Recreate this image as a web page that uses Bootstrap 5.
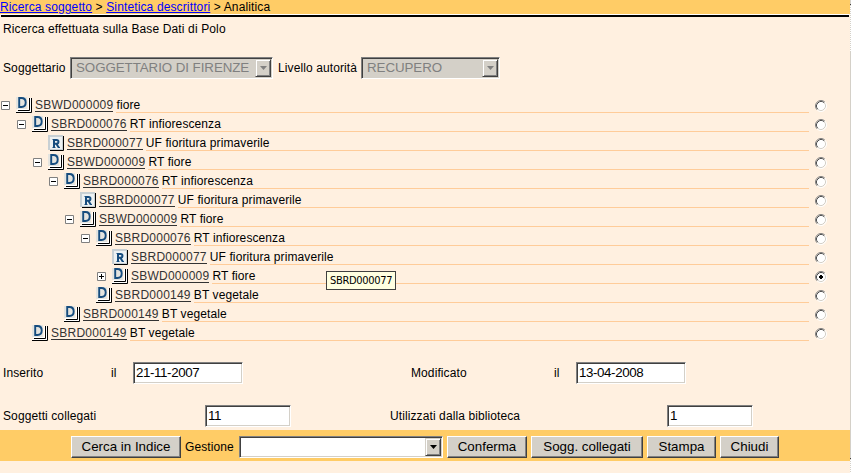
<!DOCTYPE html>
<html lang="it">
<head>
<meta charset="utf-8">
<meta name="viewport" content="width=device-width, initial-scale=1">
<title>Analitica</title>
<link href="https://cdn.jsdelivr.net/npm/bootstrap@5.3.0/dist/css/bootstrap.min.css" rel="stylesheet">
<style>
body{background:#fff0e0;color:#000;font:12px/14px "Liberation Sans",Arial,sans-serif;letter-spacing:.1px;height:473px;overflow:hidden;white-space:nowrap}
.page-main{width:850px;height:473px}
.page-edge{width:1px;background:linear-gradient(#d4d0c8 0 4px,#404040 4px 5px,transparent 5px 51px,#d4d0c8 51px 458px,#404040 458px 459px,transparent 459px),repeating-linear-gradient(#fff 0 1px,#d4d0c8 1px 2px)}
.crumbs{height:14px;background:#fc6;line-height:14px;letter-spacing:.13px}
.crumbs a{color:#00f;text-underline-offset:1px}
.rule{height:2px;margin:1px 1px 0 1px;background:#000;box-shadow:0 -1px #fff}
.intro{height:40px;padding:5px 3px 0;letter-spacing:.13px}
.filters{height:22px;padding-left:3px}
.lb1{width:67px}.lb2{width:83px;margin-left:5px}
.sunk{border:1px solid;border-color:#808080 #fff #fff #808080;box-shadow:inset 1px 1px #404040,inset -1px -1px #d4d0c8;background:#fff;height:22px;padding:0 2px 0 2px;font-size:13.33px;line-height:20px;letter-spacing:-.4px}
.sunk.off{background:#d4d0c8;color:#808080;padding-left:5px;letter-spacing:-.06px}
.w203{width:203px}.w139{width:139px}.w110{width:110px}.w85{width:86px}.w204{width:204px}
.drop{width:16px;height:18px;margin-right:-1px;background:#d4d0c8;border:1px solid;border-color:#d4d0c8 #404040 #404040 #d4d0c8;box-shadow:inset 1px 1px #fff,inset -1px -1px #808080}
.drop svg{width:7px;height:4px;display:block}
.tree{padding:15px 23px 0 0}
.node{height:19px}
.l1{padding-left:16px}.l2{padding-left:32px}.l3{padding-left:48px}.l4{padding-left:64px}.l5{padding-left:80px}.l6{padding-left:96px}
.tog{width:16px;height:19px}
.tog svg{width:9px;height:9px;margin:7px 0 0 1px;display:block}
.kind{width:16px;height:16px;margin-top:3px}
.code{margin:4px 3px 0;height:14px;line-height:14px;color:#333;border-bottom:1px solid #333;text-decoration:none;letter-spacing:.24px}
.desc{border-bottom:1px solid #fc9;padding-top:4px;height:19px;line-height:14px}
.pick{width:12px;height:12px;margin:6px 0 0 6px}
.tip{left:326px;top:271px;width:70px;height:19px;background:#ffffe1;border:1px solid #404040;font:11px/18px "DejaVu Sans Condensed","DejaVu Sans",sans-serif;letter-spacing:-.3px;padding-left:3px}
.r-dates{height:22px;margin-top:21px}
.r-counts{height:22px;margin-top:21px}
.r-dates>*,.r-counts>*{flex:none}
.c1{width:108px;margin-left:3px}.c2{width:22px}.c3{width:143px;margin-left:168px}
.c4{width:202px;margin-left:3px}.c5{width:277px;margin-left:99px}
.actions{height:31px;margin-top:3px;background:#fc6;padding:6px 0 0 71px}
.key{height:22px;margin-right:4px;background:#d4d0c8;border:1px solid;border-color:#fff #404040 #404040 #fff;box-shadow:inset -1px -1px #808080;font-size:13.33px;line-height:20px;padding:0;border-radius:0;color:#000}
.k1{width:110px;letter-spacing:0}.k2{width:80px}.k3{width:112px}.k4{width:69px}.k5{width:59px}
.g{width:54px}
</style>
</head>
<body>
<svg class="d-none" aria-hidden="true">
<symbol id="minus" viewBox="0 0 9 9"><path d="M.5.5h8v8h-8z" fill="#fff" stroke="#808080"/><path d="M2 4.500h5" stroke="#000"/></symbol>
<symbol id="plus" viewBox="0 0 9 9"><path d="M.5.5h8v8h-8z" fill="#fff" stroke="#808080"/><path d="M2 4.500h5M4.500 2v5" stroke="#000"/></symbol>
<symbol id="kd" viewBox="0 0 16 16"><path d="M0 0h11v12H0z" fill="#e4e4e0"/><path d="M3.200 1v9h2.200c3 0 4.300-1.800 4.300-4.500S8.300 1 5.400 1z" fill="none" stroke="#164c7e" stroke-width="1.900"/><path d="M1 12.500h11.500V1M0 14.500h14.500V1" fill="none" stroke="#fff"/><path d="M2 13.500h11.500V1M0 15.500h15.500V1" fill="none" stroke="#000"/></symbol>
<symbol id="kr" viewBox="0 0 16 16"><path d="M0 0h15v15H0z" fill="#c8d0d4"/><path d="M2 2h12v12H2z" fill="#edf1f2"/><path d="M6 12.500V5h2.500c2.600 0 2.600 3.700 0 3.700H6M8.300 8.700l2.400 3.800" fill="none" stroke="#164c7e" stroke-width="2"/><path d="M4.500 4.500h3M4.500 12.500h3M10 12.500h2" fill="none" stroke="#164c7e"/><path d="M2 15.500h13.500V1" fill="none" stroke="#000"/></symbol>
<symbol id="ro" viewBox="0 0 12 12"><circle cx="6" cy="6" r="5" fill="#fff"/><path d="M2.110 9.890A5.500 5.500 0 0 1 9.890 2.110" fill="none" stroke="#808080"/><path d="M9.890 2.110A5.500 5.500 0 0 1 2.110 9.890" fill="none" stroke="#fff"/><path d="M2.820 9.180A4.500 4.500 0 0 1 9.180 2.820" fill="none" stroke="#505050"/><path d="M9.180 2.820A4.500 4.500 0 0 1 2.820 9.180" fill="none" stroke="#d4d0c8"/></symbol>
<symbol id="rc" viewBox="0 0 12 12"><use href="#ro"/><path d="M5 4h2v1h1v2H7v1H5V7H4V5h1z" fill="#000"/></symbol>
</svg>
<div class="d-flex">
<main class="page-main">
<nav class="crumbs"><a href="#">Ricerca soggetto</a> &gt; <a href="#">Sintetica descrittori</a> &gt; Analitica</nav>
<div class="rule"></div>
<div class="intro">Ricerca effettuata sulla Base Dati di Polo</div>
<div class="filters d-flex align-items-center">
<span class="lb1">Soggettario</span>
<div class="sunk off w203 d-flex align-items-center"><span class="flex-grow-1">SOGGETTARIO DI FIRENZE</span><span class="drop d-flex align-items-center justify-content-center"><svg viewBox="0 0 7 4"><path d="M0 0h7L3.500 4z" fill="#808080"/></svg></span></div>
<span class="lb2">Livello autorità</span>
<div class="sunk off w139 d-flex align-items-center"><span class="flex-grow-1">RECUPERO</span><span class="drop d-flex align-items-center justify-content-center"><svg viewBox="0 0 7 4"><path d="M0 0h7L3.500 4z" fill="#808080"/></svg></span></div>
</div>
<div class="tree">
<div class="node d-flex"><span class="tog"><svg><use href="#minus"/></svg></span><svg class="kind"><use href="#kd"/></svg><a class="code" href="#">SBWD000009</a><span class="desc flex-grow-1">fiore</span><svg class="pick"><use href="#ro"/></svg></div>
<div class="node d-flex l1"><span class="tog"><svg><use href="#minus"/></svg></span><svg class="kind"><use href="#kd"/></svg><a class="code" href="#">SBRD000076</a><span class="desc flex-grow-1">RT infiorescenza</span><svg class="pick"><use href="#ro"/></svg></div>
<div class="node d-flex l2"><span class="tog"></span><svg class="kind"><use href="#kr"/></svg><a class="code" href="#">SBRD000077</a><span class="desc flex-grow-1">UF fioritura primaverile</span><svg class="pick"><use href="#ro"/></svg></div>
<div class="node d-flex l2"><span class="tog"><svg><use href="#minus"/></svg></span><svg class="kind"><use href="#kd"/></svg><a class="code" href="#">SBWD000009</a><span class="desc flex-grow-1">RT fiore</span><svg class="pick"><use href="#ro"/></svg></div>
<div class="node d-flex l3"><span class="tog"><svg><use href="#minus"/></svg></span><svg class="kind"><use href="#kd"/></svg><a class="code" href="#">SBRD000076</a><span class="desc flex-grow-1">RT infiorescenza</span><svg class="pick"><use href="#ro"/></svg></div>
<div class="node d-flex l4"><span class="tog"></span><svg class="kind"><use href="#kr"/></svg><a class="code" href="#">SBRD000077</a><span class="desc flex-grow-1">UF fioritura primaverile</span><svg class="pick"><use href="#ro"/></svg></div>
<div class="node d-flex l4"><span class="tog"><svg><use href="#minus"/></svg></span><svg class="kind"><use href="#kd"/></svg><a class="code" href="#">SBWD000009</a><span class="desc flex-grow-1">RT fiore</span><svg class="pick"><use href="#ro"/></svg></div>
<div class="node d-flex l5"><span class="tog"><svg><use href="#minus"/></svg></span><svg class="kind"><use href="#kd"/></svg><a class="code" href="#">SBRD000076</a><span class="desc flex-grow-1">RT infiorescenza</span><svg class="pick"><use href="#ro"/></svg></div>
<div class="node d-flex l6"><span class="tog"></span><svg class="kind"><use href="#kr"/></svg><a class="code" href="#">SBRD000077</a><span class="desc flex-grow-1">UF fioritura primaverile</span><svg class="pick"><use href="#ro"/></svg></div>
<div class="node d-flex l6"><span class="tog"><svg><use href="#plus"/></svg></span><svg class="kind"><use href="#kd"/></svg><a class="code" href="#">SBWD000009</a><span class="desc flex-grow-1">RT fiore</span><svg class="pick"><use href="#rc"/></svg></div>
<div class="node d-flex l5"><span class="tog"></span><svg class="kind"><use href="#kd"/></svg><a class="code" href="#">SBRD000149</a><span class="desc flex-grow-1">BT vegetale</span><svg class="pick"><use href="#ro"/></svg></div>
<div class="node d-flex l3"><span class="tog"></span><svg class="kind"><use href="#kd"/></svg><a class="code" href="#">SBRD000149</a><span class="desc flex-grow-1">BT vegetale</span><svg class="pick"><use href="#ro"/></svg></div>
<div class="node d-flex l1"><span class="tog"></span><svg class="kind"><use href="#kd"/></svg><a class="code" href="#">SBRD000149</a><span class="desc flex-grow-1">BT vegetale</span><svg class="pick"><use href="#ro"/></svg></div>
</div>
<div class="r-dates d-flex align-items-center"><span class="c1">Inserito</span><span class="c2">il</span><div class="sunk w110">21-11-2007</div><span class="c3">Modificato</span><span class="c2">il</span><div class="sunk w110">13-04-2008</div></div>
<div class="r-counts d-flex align-items-center"><span class="c4">Soggetti collegati</span><div class="sunk w85">11</div><span class="c5">Utilizzati dalla biblioteca</span><div class="sunk w85">1</div></div>
<div class="actions d-flex">
<button class="btn key k1">Cerca in Indice</button><span class="g pt-1">Gestione</span>
<div class="sunk w204 d-flex align-items-center justify-content-end me-1"><span class="drop d-flex align-items-center justify-content-center"><svg viewBox="0 0 7 4"><path d="M0 0h7L3.500 4z"/></svg></span></div>
<button class="btn key k2">Conferma</button><button class="btn key k3">Sogg. collegati</button><button class="btn key k4">Stampa</button><button class="btn key k5">Chiudi</button>
</div>
</main>
<div class="page-edge"></div>
</div>
<div class="tip position-absolute">SBRD000077</div>
<script src="https://cdn.jsdelivr.net/npm/bootstrap@5.3.0/dist/js/bootstrap.bundle.min.js"></script>
</body>
</html>
